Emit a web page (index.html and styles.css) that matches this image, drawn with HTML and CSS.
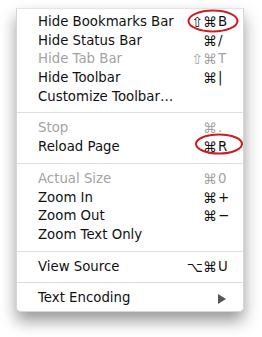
FILE: index.html
```html
<!DOCTYPE html>
<html lang="en">
<head>
    <meta charset="UTF-8">
    <title>View Menu</title>
    <link rel="stylesheet" href="styles.css">
</head>
<body>
    <div class="stage">
        <ul class="menu">
            <li class="item"><span class="label">Hide Bookmarks Bar</span><span class="keys"><span class="mods">⇧⌘</span><span class="key">B</span></span></li>
            <li class="item"><span class="label">Hide Status Bar</span><span class="keys"><span class="mods">⌘</span><span class="key">/</span></span></li>
            <li class="item disabled"><span class="label">Hide Tab Bar</span><span class="keys"><span class="mods">⇧⌘</span><span class="key">T</span></span></li>
            <li class="item"><span class="label">Hide Toolbar</span><span class="keys"><span class="mods">⌘</span><span class="key">|</span></span></li>
            <li class="item"><span class="label">Customize Toolbar…</span></li>
            <li class="sep"></li>
            <li class="item disabled"><span class="label">Stop</span><span class="keys"><span class="mods">⌘</span><span class="key">.</span></span></li>
            <li class="item"><span class="label">Reload Page</span><span class="keys"><span class="mods">⌘</span><span class="key">R</span></span></li>
            <li class="sep"></li>
            <li class="item disabled"><span class="label">Actual Size</span><span class="keys"><span class="mods">⌘</span><span class="key">0</span></span></li>
            <li class="item"><span class="label">Zoom In</span><span class="keys"><span class="mods">⌘</span><span class="key">+</span></span></li>
            <li class="item"><span class="label">Zoom Out</span><span class="keys"><span class="mods">⌘</span><span class="key">−</span></span></li>
            <li class="item"><span class="label">Zoom Text Only</span></li>
            <li class="sep"></li>
            <li class="item"><span class="label">View Source</span><span class="keys"><span class="mods">⌥⌘</span><span class="key">U</span></span></li>
            <li class="sep"></li>
            <li class="item"><span class="label">Text Encoding</span><span class="submenu"></span></li>
        </ul>

        <!-- red marker circles drawn over the shortcuts -->
        <svg class="marks" width="262" height="337" viewBox="0 0 262 337">
            <ellipse cx="213" cy="21" rx="24.5" ry="10.5" fill="none" stroke="#cf1b22" stroke-width="2"/>
            <ellipse cx="219" cy="144" rx="23" ry="9.5" fill="none" stroke="#cf1b22" stroke-width="2"/>
        </svg>
    </div>
</body>
</html>
```

FILE: styles.css
```css
* {
    margin: 0;
    padding: 0;
    box-sizing: border-box;
}

body {
    background-color: #fff;
    font-family: 'DejaVu Sans', 'Liberation Sans', sans-serif;
    font-size: 13.3px;
    color: #111;
}

.stage {
    position: relative;
    width: 262px;
    height: 337px;
    padding: 8px 0 0 16px;
}

.menu {
    list-style: none;
    width: 228px;
    padding: 4px 0 3px;
    background-color: #fff;
    border: 1px solid #d6d6d6;
    border-top-color: #e4e4e4;
    border-radius: 0 0 5px 5px;
    box-shadow: 0 9px 16px rgba(0, 0, 0, 0.4);
}

.item {
    display: flex;
    align-items: center;
    height: 18.7px;
    line-height: 18.7px;
    padding: 0 15px 0 21px;
}

.label {
    flex: 1;
}

.disabled {
    color: #a3a3a3;
}

.keys {
    display: flex;
}

.mods {
    text-align: right;
    font-size: 14px;
}

.key {
    width: 10px;
    margin-left: 1px;
}

.sep {
    height: 1px;
    margin: 6px 0;
    background-color: #dedede;
}

.submenu {
    width: 0;
    height: 0;
    margin-right: 2px;
    border-top: 5px solid transparent;
    border-bottom: 5px solid transparent;
    border-left: 8px solid #555;
}

.marks {
    position: absolute;
    top: 0;
    left: 0;
}
```
